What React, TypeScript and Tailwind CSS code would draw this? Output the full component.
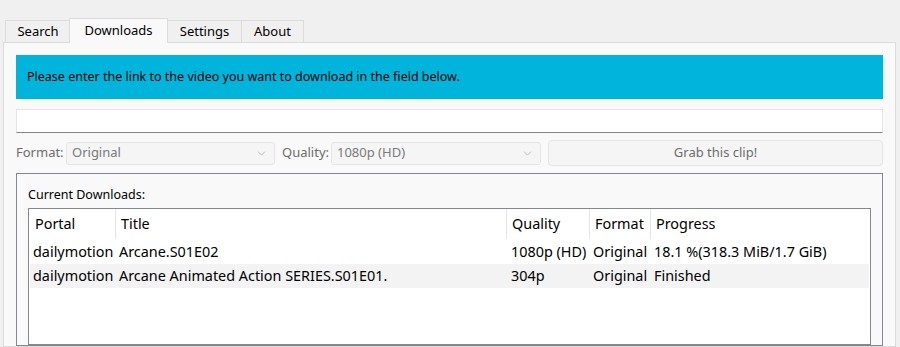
import { ChevronDown } from 'lucide-react';

const tabs = [
  { label: 'Search', w: 'w-[66px]' },
  { label: 'Downloads', w: 'w-[99px]', active: true },
  { label: 'Settings', w: 'w-[75px]' },
  { label: 'About', w: 'w-[63px]' },
];

const rows = [
  { portal: 'dailymotion', title: 'Arcane.S01E02', quality: '1080p (HD)', format: 'Original', progress: '18.1 %(318.3 MiB/1.7 GiB)' },
  { portal: 'dailymotion', title: 'Arcane Animated Action SERIES.S01E01.', quality: '304p', format: 'Original', progress: 'Finished' },
];

const cols = 'grid grid-cols-[85px_391px_83px_61px_1fr]';

function Combo({ value, w }: { value: string; w: string }) {
  return (
    <div className={`${w} flex h-[23px] items-center justify-between rounded-[3px] border border-[#e5e5e5] bg-[#f5f5f5] pl-[5px] pr-[6px] text-[13px] text-[#7a7a7a]`}>
      <span>{value}</span>
      <ChevronDown className="h-[13px] w-[13px] text-[#a0a0a0]" strokeWidth={1.2} />
    </div>
  );
}

export default function App() {
  return (
    <div className="flex h-[347px] w-[900px] flex-col overflow-hidden bg-[#f0f0f0] text-black" style={{ fontFamily: '"Noto Sans", "Open Sans", sans-serif' }}>
      <div className="flex h-[42px] items-end pl-[5px]">
        {tabs.map((t) =>
          t.active ? (
            <div key={t.label} className={`${t.w} relative z-10 -mx-px -mb-px flex h-[25px] items-center justify-center border border-b-0 border-[#dcdcdc] bg-[#f9f9f9] text-[13px]`}>
              {t.label}
            </div>
          ) : (
            <div key={t.label} className={`${t.w} -mr-px flex h-[22px] items-center justify-center border border-b-0 border-[#dcdcdc] bg-[#f0f0f0] pt-[1px] text-[13px]`}>
              {t.label}
            </div>
          )
        )}
      </div>
      <div className="ml-[3px] flex w-[893px] flex-1 flex-col border border-[#dcdcdc] bg-[#f9f9f9] px-[12px] pt-[12px]">
        <div className="flex h-[44px] items-center bg-[#00b4db] pl-[11px] text-[12.5px]">
          Please enter the link to the video you want to download in the field below.
        </div>
        <div className="mt-[10px] h-[24px] border border-b-[#868686] border-[#e5e5e5] bg-white" />
        <div className="mt-[7px] flex items-center text-[13px] text-[#6d6d6d]">
          <span className="w-[50px]">Format:</span>
          <Combo value="Original" w="w-[209px]" />
          <span className="ml-[7px] w-[49px]">Quality:</span>
          <Combo value="1080p (HD)" w="w-[210px]" />
          <div className="ml-[7px] flex h-[26px] flex-1 items-center justify-center rounded-[4px] border border-[#e5e5e5] bg-[#f5f5f5] text-[#6d6d6d]">
            Grab this clip!
          </div>
        </div>
        <div className="mt-[7px] flex flex-1 flex-col border border-[#828790] px-[11px] pt-[11px]">
          <div className="text-[12.5px] leading-[20px]">Current Downloads:</div>
          <div className="mt-[3px] flex-1 border border-[#828790] bg-white pl-[1px] pr-[1px] text-[14.4px]">
            <div className={`${cols} h-[30px] items-center`}>
              {['Portal', 'Title', 'Quality', 'Format', 'Progress'].map((h, i) => (
                <div key={h} className={`flex h-full items-center pl-[5px] ${i > 0 ? 'border-l border-[#e5e5e5]' : ''}`}>
                  {h}
                </div>
              ))}
            </div>
            {rows.map((r, i) => (
              <div key={i} className={`${cols} h-[24px] items-center ${i % 2 === 1 ? 'bg-[#f3f3f3]' : 'mt-[1px]'}`}>
                <div className="pl-[3px]">{r.portal}</div>
                <div className="pl-[4px]">{r.title}</div>
                <div className="pl-[5px]">{r.quality}</div>
                <div className="pl-[4px]">{r.format}</div>
                <div className="pl-[4px]">{r.progress}</div>
              </div>
            ))}
          </div>
        </div>
      </div>
    </div>
  );
}
